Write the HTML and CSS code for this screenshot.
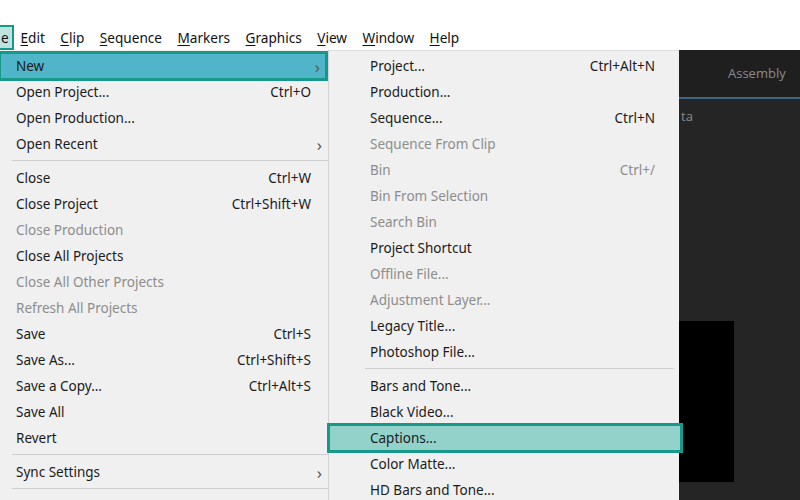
FILE: index.html
```html
<!DOCTYPE html>
<html lang="en">
<head>
    <meta charset="UTF-8">
    <title>Premiere Pro - File menu</title>
    <link rel="stylesheet" href="styles.css">
</head>
<body>
    <div class="app">
        <div class="menubar">
            <span class="top-item file-item">e</span>
            <span class="top-item"><u>E</u>dit</span>
            <span class="top-item"><u>C</u>lip</span>
            <span class="top-item"><u>S</u>equence</span>
            <span class="top-item"><u>M</u>arkers</span>
            <span class="top-item"><u>G</u>raphics</span>
            <span class="top-item"><u>V</u>iew</span>
            <span class="top-item"><u>W</u>indow</span>
            <span class="top-item"><u>H</u>elp</span>
        </div>

        <div class="workspace">
            <!-- File menu -->
            <div class="menu file-menu">
                <div class="row active"><span>New</span><span class="arrow">&#8250;</span></div>
                <div class="row"><span>Open Project...</span><span class="key">Ctrl+O</span></div>
                <div class="row"><span>Open Production...</span></div>
                <div class="row"><span>Open Recent</span><span class="arrow">&#8250;</span></div>
                <div class="sep"></div>
                <div class="row"><span>Close</span><span class="key">Ctrl+W</span></div>
                <div class="row"><span>Close Project</span><span class="key">Ctrl+Shift+W</span></div>
                <div class="row off"><span>Close Production</span></div>
                <div class="row"><span>Close All Projects</span></div>
                <div class="row off"><span>Close All Other Projects</span></div>
                <div class="row off"><span>Refresh All Projects</span></div>
                <div class="row"><span>Save</span><span class="key">Ctrl+S</span></div>
                <div class="row"><span>Save As...</span><span class="key">Ctrl+Shift+S</span></div>
                <div class="row"><span>Save a Copy...</span><span class="key">Ctrl+Alt+S</span></div>
                <div class="row"><span>Save All</span></div>
                <div class="row"><span>Revert</span></div>
                <div class="sep"></div>
                <div class="row"><span>Sync Settings</span><span class="arrow">&#8250;</span></div>
                <div class="sep"></div>
            </div>

            <!-- New submenu -->
            <div class="menu sub-menu">
                <div class="row"><span>Project...</span><span class="key">Ctrl+Alt+N</span></div>
                <div class="row"><span>Production...</span></div>
                <div class="row"><span>Sequence...</span><span class="key">Ctrl+N</span></div>
                <div class="row off"><span>Sequence From Clip</span></div>
                <div class="row off"><span>Bin</span><span class="key">Ctrl+/</span></div>
                <div class="row off"><span>Bin From Selection</span></div>
                <div class="row off"><span>Search Bin</span></div>
                <div class="row"><span>Project Shortcut</span></div>
                <div class="row off"><span>Offline File...</span></div>
                <div class="row off"><span>Adjustment Layer...</span></div>
                <div class="row"><span>Legacy Title...</span></div>
                <div class="row"><span>Photoshop File...</span></div>
                <div class="sep"></div>
                <div class="row"><span>Bars and Tone...</span></div>
                <div class="row"><span>Black Video...</span></div>
                <div class="row picked"><span>Captions...</span></div>
                <div class="row"><span>Color Matte...</span></div>
                <div class="row"><span>HD Bars and Tone...</span></div>
            </div>

            <!-- Premiere panel behind the menus -->
            <div class="panel">
                <div class="panel-head">Assembly</div>
                <div class="panel-body">
                    <div class="panel-label">ta</div>
                    <div class="monitor"></div>
                </div>
            </div>
        </div>
    </div>
</body>
</html>
```

FILE: styles.css
```css
body {
    margin: 0;
    font-family: "Noto Sans", "Open Sans", sans-serif;
    color: #1b1b1b;
    background-color: #fff;
}

.app {
    width: 800px;
    height: 500px;
    overflow: hidden;
    display: flex;
    flex-direction: column;
}

.menubar {
    height: 50px;
    flex: none;
    display: flex;
    align-items: flex-end;
    gap: 15.5px;
    font-size: 13.6px;
    color: #111;
    background-color: #fff;
    box-sizing: border-box;
}

.top-item {
    display: block;
    height: 25px;
    line-height: 25px;
    white-space: nowrap;
}

.top-item u {
    text-underline-offset: 2px;
}

.file-item {
    width: 14px;
    padding-left: 1px;
    line-height: 22px;
    background-color: #bfe4df;
    border: 2px solid #17998a;
    border-left: none;
    box-sizing: border-box;
    margin-right: -9px;
}

.workspace {
    flex: 1;
    display: flex;
    min-height: 0;
}

.menu {
    background-color: #f0f0f0;
    font-size: 13.5px;
    padding-top: 3px;
    box-sizing: border-box;
}

.file-menu {
    width: 329px;
    border-right: 1px solid #d2d2d2;
}

.sub-menu {
    width: 350px;
    border-top: 1px solid #dcdcdc;
    padding-top: 2px;
}

.row {
    height: 26px;
    display: flex;
    align-items: center;
    justify-content: space-between;
    white-space: nowrap;
    position: relative;
}

.file-menu .row {
    padding: 0 17px 0 16px;
}

.sub-menu .row {
    padding: 0 24px 0 41px;
}

.row.off {
    color: #8d8d8d;
}

.arrow {
    font-size: 17px;
    color: #555;
    margin-right: -11px;
}

.row.active {
    background-color: #50b5c8;
    outline: 3px solid #17998a;
    outline-offset: -1px;
    margin-right: 2px;
}

.row.picked {
    background-color: #92d2ca;
    outline: 3px solid #17998a;
    outline-offset: -1px;
    margin-right: -2px;
    z-index: 1;
}

.sep {
    height: 1px;
    background-color: #d0d0d0;
    margin: 3px 0 4px 12px;
}

.sub-menu .sep {
    margin: 3px 5px 4px 36px;
}

.panel {
    flex: 1;
    background-color: #232323;
    display: flex;
    flex-direction: column;
    font-family: "Open Sans", "Noto Sans", sans-serif;
    color: #8a8a8a;
}

.panel-head {
    height: 49px;
    border-bottom: 2px solid #3f6584;
    display: flex;
    align-items: center;
    padding: 0 0 2px 49px;
    box-sizing: border-box;
    font-size: 13px;
    background-color: #1f1f1f;
}

.panel-body {
    flex: 1;
    background-color: #252525;
    font-size: 13px;
}

.panel-label {
    padding: 8px 0 0 2px;
}

.monitor {
    width: 55px;
    height: 161px;
    margin-top: 196px;
    background-color: #000;
}
```
